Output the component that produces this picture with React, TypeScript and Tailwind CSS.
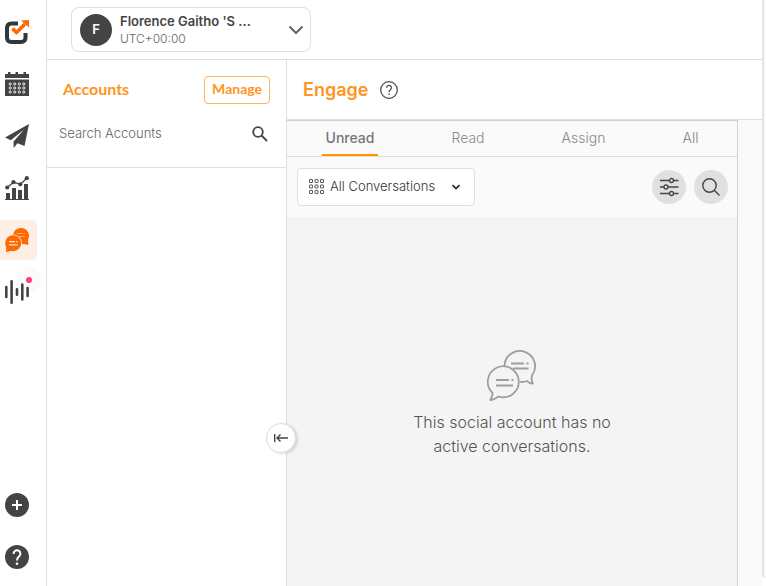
import { useState } from "react";
import type { ReactNode } from "react";

function LogoIcon() {
  return (
    <svg viewBox="0 0 24 24" className="size-6" fill="none">
      <path d="M13 3.500H6.500Q2 3.500 2 8V17.500Q2 22 6.500 22H16Q20.500 22 20.500 17.500V13" stroke="#333739" strokeWidth="4" />
      <path d="M7.500 8.500L11.500 12.500L20 4" stroke="#ff6a00" strokeWidth="3.600" strokeLinejoin="round" />
      <path d="M16 0.500L24 0V7.500Z" fill="#ff6a00" />
    </svg>
  );
}

function CalendarIcon() {
  const columns = [5.2, 9.7, 14.3, 18.8];
  const rows = [12, 16, 20];
  return (
    <svg viewBox="0 0 24 24" className="size-6">
      <path d="M0 2H3V0H5.500V2H10.500V0H13V2H18.500V0H21V2H24V6H0ZM0 7.500H24V24H0Z" fill="#444" />
      {rows.map((y) =>
        columns.map((x) => <circle key={`${x}-${y}`} cx={x} cy={y} r="1.100" fill="none" stroke="#fff" strokeWidth="0.900" />)
      )}
    </svg>
  );
}

function PlaneIcon() {
  return (
    <svg viewBox="0 0 24 24" className="size-6" fill="#444">
      <path d="M24 0L0 13.500L5.800 16.200L19 5.500L8.600 17.500V24L12.500 19.200L19.500 22Z" />
    </svg>
  );
}

function ChartIcon() {
  return (
    <svg viewBox="0 0 24 24" className="size-6" fill="#444">
      <path d="M0 23H24V24H0ZM1 17H5V23H1ZM7 12H11V23H7ZM13 14H17V23H13ZM19 8H23V23H19Z" />
      <path d="M2.200 11.500L8.500 6.200L15.300 8.300L21.800 2.200" fill="none" stroke="#444" strokeWidth="1.200" />
      <circle cx="2.200" cy="11.500" r="2.100" />
      <circle cx="8.500" cy="6.200" r="2.100" />
      <circle cx="15.300" cy="8.300" r="2.100" />
      <circle cx="21.800" cy="2.200" r="2.100" />
    </svg>
  );
}

function ChatIcon() {
  return (
    <svg viewBox="0 0 24 24" className="size-6" fill="#ff6a00">
      <circle cx="16" cy="8" r="8" />
      <path d="M23 11L23.300 17L17 15.500Z" />
      <path d="M12 5.500H17.500M18.500 5.500H20M14 8.500H20" stroke="#ffb07a" strokeWidth="1" />
      <circle cx="8.200" cy="15.200" r="8.700" fill="#ffeee3" />
      <circle cx="8.200" cy="15.200" r="8" />
      <path d="M1.200 18L1 24L7 22.800Z" />
      <path d="M4 13.700H10M11 13.700H12.500M4 16.900H12.500" stroke="#ffe3d0" strokeWidth="1.200" />
    </svg>
  );
}

function BarsIcon() {
  return (
    <svg viewBox="0 0 24 24" className="size-6" fill="none" stroke="#444" strokeWidth="2.600" strokeLinecap="round">
      <path d="M1.300 7V17M6.600 1.300V22.700M12 9.300V14.700M17.300 4.500V19.500M22.600 8V16" />
    </svg>
  );
}

function PlusIcon() {
  return (
    <svg viewBox="0 0 24 24" className="size-6" fill="none">
      <circle cx="12" cy="12" r="12" fill="#444" />
      <path d="M12 7V17M7 12H17" stroke="#fff" strokeWidth="2" />
    </svg>
  );
}

function HelpIcon() {
  return (
    <svg viewBox="0 0 24 24" className="size-6" fill="none">
      <circle cx="12" cy="12" r="12" fill="#444" />
      <path d="M8.600 9A3.400 3.400 0 1 1 14.200 11.200C12.700 12.400 12 13.200 12 15.500" stroke="#fff" strokeWidth="2" />
      <circle cx="12" cy="18.800" r="1.300" fill="#fff" />
    </svg>
  );
}

function ConversationsIcon() {
  return (
    <svg viewBox="0 0 50 52" className="h-[52px] w-[50px]" fill="none" stroke="#9e9e9e" strokeWidth="1.800" strokeLinejoin="round">
      <path d="M17.500 16A15.300 15.300 0 1 1 45 25.500C44.200 28.500 44.500 31.300 46 33.700C43.500 33.800 41.500 32.700 40.100 31C37.500 32 35 32.200 33 31.700" />
      <path d="M5.600 43A15.500 15.500 0 1 1 11.500 46.500C9 48 6.500 50.500 3.200 50C5 47.500 5.600 45.500 5.600 43Z" />
      <path d="M24 13.500H37M39.500 13.500H41.500M26 18.500H41.500M9 30H22M24.500 30H26.500M9 35.500H26" />
    </svg>
  );
}

function GridIcon() {
  const stops = [1, 6.5, 12];
  return (
    <svg viewBox="0 0 16 16" className="size-4 shrink-0" fill="none" stroke="#555">
      {stops.map((y) => stops.map((x) => <rect key={`${x}-${y}`} x={x - 0.5} y={y - 0.5} width="3" height="3" rx="0.400" />))}
    </svg>
  );
}

function RailItem({ label, active, children }: { label: string; active?: boolean; children: ReactNode }) {
  return (
    <button type="button" aria-label={label} className={`relative flex h-10 w-[37px] items-center rounded-r pl-[5px] ${active ? "bg-[#ffeee3]" : ""}`}>
      {children}
    </button>
  );
}

const tabs = ["Unread", "Read", "Assign", "All"];

export default function App() {
  const [tab, setTab] = useState("Unread");
  return (
    <div className="flex h-screen overflow-hidden bg-white font-['Inter','Liberation_Sans',sans-serif] text-[#444]">
      <nav className="flex w-[47px] shrink-0 flex-col justify-between border-r border-[#dedede] pt-3 pb-[9px]">
        <div className="flex flex-col gap-3">
          <RailItem label="Home"><LogoIcon /></RailItem>
          <RailItem label="Calendar"><CalendarIcon /></RailItem>
          <RailItem label="Publish"><PlaneIcon /></RailItem>
          <RailItem label="Analytics"><ChartIcon /></RailItem>
          <RailItem label="Engage" active><ChatIcon /></RailItem>
          <RailItem label="Listening">
            <span className="absolute top-[-4px] left-[17px] size-6 rounded-full bg-[#fafafc]" />
            <span className="relative"><BarsIcon /></span>
            <span className="absolute top-[5px] left-[26px] size-[6px] rounded-full bg-[#ff4070]" />
          </RailItem>
        </div>
        <div className="flex flex-col gap-3">
          <RailItem label="Add"><PlusIcon /></RailItem>
          <RailItem label="Help"><HelpIcon /></RailItem>
        </div>
      </nav>

      <div className="flex min-w-0 flex-1 flex-col">
        <header className="flex h-[60px] shrink-0 items-center border-b border-[#dedede] px-6">
          <button type="button" aria-haspopup="listbox" className="flex h-[45px] w-60 items-center rounded-lg border border-[#dedede] pr-[6px] pl-2 text-left">
            <span className="flex size-8 shrink-0 items-center justify-center rounded-full bg-[#444] text-[13px] font-semibold text-white">F</span>
            <span className="ml-2 flex-1">
              <span className="block text-[13px] leading-[18px] font-semibold">Florence Gaitho 'S ...</span>
              <span className="block text-xs leading-[18px] font-light text-[#666]">UTC+00:00</span>
            </span>
            <svg viewBox="0 0 16 10" className="h-[10px] w-4" fill="none" stroke="#666" strokeWidth="2">
              <path d="M1.500 1.500L8 8L14.500 1.500" />
            </svg>
          </button>
        </header>

        <div className="flex min-h-0 flex-1">
          <aside className="relative w-60 shrink-0 border-r border-[#dedede]">
            <div className="border-b border-[#dedede] pb-5">
              <div className="flex items-center justify-between px-4 pt-4">
                <h2 className="pb-[2px] font-['Lato',sans-serif] text-base font-bold text-[#ff9421]">Accounts</h2>
                <button type="button" className="h-7 rounded border border-[#ffb45e] px-[7px] pb-[2px] font-['Lato',sans-serif] text-sm font-bold text-[#ff9421]">Manage</button>
              </div>
              <label className="mt-[17px] flex h-[26px] items-center justify-between pr-[18px] pl-3">
                <input aria-label="Search Accounts" placeholder="Search Accounts" className="w-40 text-[13px] font-light outline-none placeholder:text-[#666]" />
                <svg viewBox="0 0 16 16" className="size-4" fill="none" stroke="#444" strokeWidth="1.800">
                  <circle cx="6" cy="6" r="4.800" />
                  <path d="M9.500 9.500L15 15" />
                </svg>
              </label>
            </div>
            <button type="button" aria-label="Collapse accounts" className="absolute top-[363px] right-[-10px] z-10 flex size-[30px] items-center justify-center rounded-full border border-[#dedede] bg-white shadow-[2px_1px_3px_#0002]">
              <svg viewBox="0 0 14 10" className="h-[10px] w-[14px]" fill="none" stroke="#444" strokeWidth="1.400">
                <path d="M0.700 1V9M3 5H14M6.500 1.500L3 5L6.500 8.500" />
              </svg>
            </button>
          </aside>

          <main className="flex min-w-0 flex-1 flex-col bg-[#fafafa]">
            <div className="flex h-[60px] shrink-0 items-center gap-3 border-b border-[#dedede] bg-white px-4">
              <h1 className="text-lg font-semibold text-[#ff9421]">Engage</h1>
              <button type="button" aria-label="About Engage">
                <svg viewBox="0 0 18 18" className="size-[18px]" fill="none" stroke="#444" strokeWidth="1.200">
                  <circle cx="9" cy="9" r="8.300" />
                  <path d="M6.600 6.900A2.400 2.400 0 1 1 10.400 8.700C9.400 9.500 9 9.900 9 11.200M9 12.500V14" />
                </svg>
              </button>
            </div>

            <section className="flex min-h-0 w-[451px] flex-1 flex-col border-t border-r border-[#d2d2d2]">
              <div role="tablist" className="flex h-9 shrink-0 justify-around border-b border-[#dedede] text-sm text-[#888]">
                {tabs.map((name) => (
                  <button
                    key={name}
                    type="button"
                    role="tab"
                    aria-selected={tab === name}
                    onClick={() => setTab(name)}
                    className={`border-b-2 px-1 ${tab === name ? "border-[#ff9800] font-medium text-[#777]" : "border-transparent font-light"}`}
                  >
                    {name}
                  </button>
                ))}
              </div>
              <div className="flex h-[60px] shrink-0 items-center justify-between pr-[9px] pl-[10px]">
                <label className="relative flex h-[38px] w-[178px] items-center rounded border border-[#dedede] bg-white pl-[11px]">
                  <GridIcon />
                  <select aria-label="Conversation filter" className="h-full flex-1 appearance-none bg-transparent pl-[5px] text-[13px] font-light text-[#333] outline-none">
                    <option>All Conversations</option>
                  </select>
                  <svg viewBox="0 0 8 6" className="pointer-events-none absolute right-[14px] h-[6px] w-2" fill="none" stroke="#222" strokeWidth="1.600">
                    <path d="M0.500 1L4 4.500L7.500 1" />
                  </svg>
                </label>
                <div className="flex gap-2">
                  <button type="button" aria-label="Filters" className="flex size-[34px] items-center justify-center rounded-full bg-[#e0e0e0]">
                    <svg viewBox="0 0 20 20" className="size-5" fill="none" stroke="#444" strokeWidth="1.300">
                      <path d="M1 3.500H10.500M14.500 3.500H19.500M1 10H5M9 10H19.500M1 16.500H10.500M14.500 16.500H19.500" />
                      <circle cx="12.500" cy="3.500" r="2" />
                      <circle cx="7" cy="10" r="2" />
                      <circle cx="12.500" cy="16.500" r="2" />
                    </svg>
                  </button>
                  <button type="button" aria-label="Search conversations" className="flex size-[34px] items-center justify-center rounded-full bg-[#e0e0e0]">
                    <svg viewBox="0 0 18 18" className="size-[18px]" fill="none" stroke="#444" strokeWidth="1.400">
                      <circle cx="7.500" cy="7.500" r="6.700" />
                      <path d="M12.300 12.300L17.500 17.500" />
                    </svg>
                  </button>
                </div>
              </div>
              <div className="flex flex-1 flex-col items-center justify-center gap-2 bg-[#f4f4f4] pt-1">
                <ConversationsIcon />
                <p className="w-[210px] text-center text-base font-light text-[#555]">This social account has no active conversations.</p>
              </div>
            </section>
          </main>
        </div>
      </div>

      <aside className="mb-2 w-1 shrink-0 rounded-bl-lg border-l-2 border-[#e4e4e4] bg-[#fafafa]" />
    </div>
  );
}
